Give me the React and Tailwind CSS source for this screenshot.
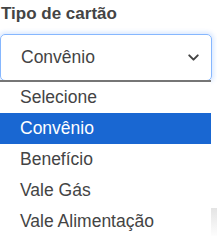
import { ChevronDown } from 'lucide-react'

const options = ['Selecione', 'Convênio', 'Benefício', 'Vale Gás', 'Vale Alimentação']

export default function App() {
  const selected = 'Convênio'

  return (
    <div className="h-[236px] w-[217px] overflow-hidden bg-white font-['Liberation_Sans',Arial,sans-serif]">
      <label className="block pl-px pt-[4px] text-[17px] leading-[20px] font-bold text-[#444]">
        Tipo de cartão
      </label>

      <div className="mt-[10px] flex h-[47px] w-[212px] items-center justify-between rounded-[5px] border border-[#86b7fe] pl-5 pr-[9px] text-[17.5px] text-[#444] shadow-[0_0_4px_2px_rgba(13,110,253,0.15)]">
        <span>{selected}</span>
        <ChevronDown className="h-[17px] w-[17px] text-[#444]" strokeWidth={2.8} />
      </div>

      <div className="flex">
        <ul className="-mt-px w-[211px] border-t-2 border-[#767676] bg-white">
          {options.map((opt) => (
            <li
              key={opt}
              className={
                opt === selected
                  ? 'flex h-[31px] items-center bg-[#1967d2] pl-5 text-[17.5px] text-white'
                  : 'flex h-[31px] items-center pl-5 text-[17.5px] text-[#444]'
              }
            >
              {opt}
            </li>
          ))}
        </ul>
        <div className="flex flex-col">
          <div className="h-[127px]" />
          <div className="h-[30px] w-[6px] bg-gradient-to-b from-[#e4e4e4] to-white" />
        </div>
      </div>
    </div>
  )
}
